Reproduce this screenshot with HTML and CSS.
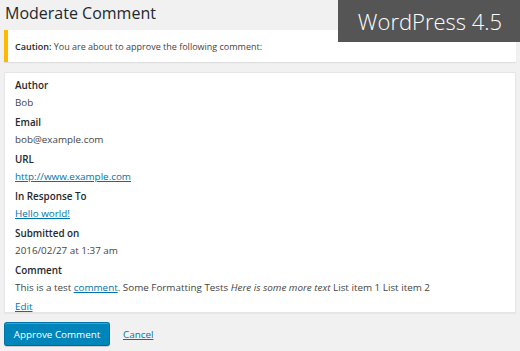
FILE: index.html
```html
<html>
<head>
  <meta charset="UTF-8">
  <title>Moderate Comment</title>
  <link rel="stylesheet" href="styles.css">
</head>
<body>
  <div class="wrap">
    <h1>Moderate Comment</h1>

    <div class="notice">
      <p><strong>Caution:</strong> You are about to approve the following comment:</p>
    </div>

    <div class="comment-box">
      <div class="field">
        <div class="label">Author</div>
        <div class="value">Bob</div>
      </div>
      <div class="field">
        <div class="label">Email</div>
        <div class="value">bob@example.com</div>
      </div>
      <div class="field">
        <div class="label">URL</div>
        <div class="value"><a href="#">http://www.example.com</a></div>
      </div>
      <div class="field">
        <div class="label">In Response To</div>
        <div class="value"><a href="#">Hello world!</a></div>
      </div>
      <div class="field">
        <div class="label">Submitted on</div>
        <div class="value">2016/02/27 at 1:37 am</div>
      </div>
      <div class="field">
        <div class="label">Comment</div>
        <div class="value">This is a test <a href="#">comment</a>. Some Formatting Tests <em>Here is some more text</em> List item 1 List item 2</div>
      </div>
      <div class="edit"><a href="#">Edit</a></div>
    </div>

    <div class="actions">
      <button class="button-primary">Approve Comment</button>
      <a href="#" class="cancel">Cancel</a>
    </div>
  </div>

  <div class="version-badge">WordPress 4.5</div>
</body>
</html>
```

FILE: styles.css
```css
body {
  font-family: 'Open Sans', 'Liberation Sans', sans-serif;
  background: #f1f1f1;
  color: #444;
  margin: 0;
  font-size: 9.85px;
}

a {
  color: #0073aa;
}

.wrap {
  padding: 0 4px;
}

h1 {
  font-size: 16px;
  font-weight: 400;
  color: #23282d;
  margin: 0;
  padding-left: 1px;
  line-height: 26px;
}

.notice {
  margin-top: 4px;
  background: #fff;
  border-left: 4px solid #ffb900;
  box-shadow: 0 1px 1px rgba(0, 0, 0, 0.08);
  height: 32px;
  display: flex;
  align-items: center;
  padding-left: 7px;
}

.notice p {
  margin: 0;
  color: #444;
  font-size: 9px;
}

.notice strong {
  font-weight: 600;
  color: #23282d;
}

.comment-box {
  margin-top: 10px;
  background: #fff;
  border: 1px solid #e5e5e5;
  box-shadow: 0 1px 1px rgba(0, 0, 0, 0.04);
  padding: 4px 10px 0;
  height: 241px;
  box-sizing: border-box;
}

.field {
  margin-bottom: 2.4px;
}

.label {
  font-weight: 600;
  color: #23282d;
  line-height: 17.3px;
}

.value {
  line-height: 17.3px;
}

.edit {
  line-height: 14px;
  margin-top: 2px;
}

.actions {
  display: flex;
  align-items: center;
  gap: 13px;
  margin-top: 9px;
}

.button-primary {
  font-family: inherit;
  font-size: 9.85px;
  color: #fff;
  background: #0085ba;
  border: 1px solid #0073aa;
  border-bottom-color: #006799;
  box-shadow: inset 0 1px 0 rgba(120, 200, 230, 0.5), 0 1px 0 rgba(0, 0, 0, 0.15);
  border-radius: 3px;
  height: 24px;
  width: 106px;
  padding: 0;
  cursor: pointer;
}

.cancel {
  font-size: 9.85px;
}

.version-badge {
  position: absolute;
  top: 0;
  right: 0;
  width: 182px;
  height: 42px;
  background: #555;
  color: #fff;
  font-weight: 300;
  font-size: 22px;
  display: flex;
  align-items: center;
  justify-content: center;
  padding-left: 2px;
  box-sizing: border-box;
}
```
